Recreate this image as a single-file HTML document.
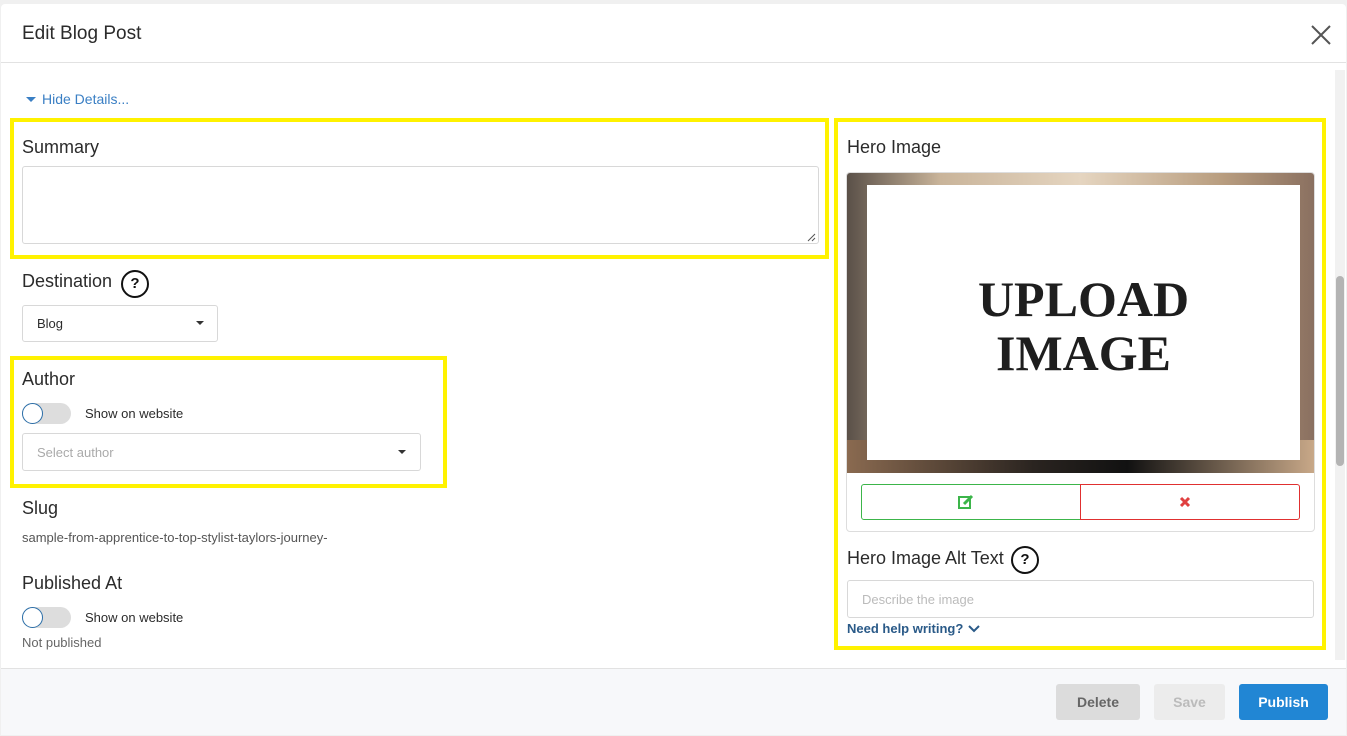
<!DOCTYPE html><html><head><style>
*{box-sizing:border-box;margin:0;padding:0}
body{width:1347px;height:736px;overflow:hidden;background:#f0f0f0;font-family:"Liberation Sans",sans-serif;position:relative;color:#2b2b2b}
.a{position:absolute}
.modal{left:1px;top:4px;width:1345px;height:731px;background:#fff;border-radius:4px}
.lbl{font-size:18px;color:#2b2b2b}
.yb{border:4px solid #fff200}
.inp{border:1px solid #d8d8d8;border-radius:3px;background:#fff}
.tg{width:49px;height:21px;border-radius:11px;background:#ddd}
.tg::after{content:"";position:absolute;left:0;top:0;width:21px;height:21px;border-radius:50%;background:#fff;border:1px solid #2b6ea8;box-sizing:border-box}
.q{width:28px;height:28px;border:2px solid #111;border-radius:50%;font-size:15px;font-weight:bold;text-align:center;line-height:24px;color:#111}
.caret{width:0;height:0;border-left:4px solid transparent;border-right:4px solid transparent;border-top:4px solid #333}
.btn{height:36px;border-radius:3px;font-size:14px;font-weight:bold;text-align:center;line-height:36px}
</style></head><body>
<div class="a modal"></div>
<div class="a" style="left:22px;top:23px;font-size:19px">Edit Blog Post</div>
<svg class="a" style="left:1310px;top:24px" width="22" height="22"><path d="M2 2L20 20M20 2L2 20" stroke="#555" stroke-width="2"/></svg>
<div class="a" style="left:1px;top:62px;width:1345px;height:1px;background:#e2e2e2"></div>
<div class="a" style="left:1335px;top:70px;width:10px;height:590px;background:#f1f1f1"></div>
<div class="a" style="left:1336px;top:276px;width:8px;height:190px;background:#b4b4b4;border-radius:4px"></div>
<div class="a caret" style="left:26px;top:97px;border-top-color:#3a7fc4;border-width:5px 5px 0 5px"></div>
<div class="a" style="left:42px;top:91px;font-size:14px;color:#3a7fc4">Hide Details...</div>

<div class="a yb" style="left:10px;top:118px;width:819px;height:141px"></div>
<div class="a lbl" style="left:22px;top:137px">Summary</div>
<div class="a inp" style="left:22px;top:166px;width:797px;height:78px"></div>
<svg class="a" style="left:806px;top:232px" width="10" height="10"><path d="M9 2L2 9M9 6L6 9" stroke="#555"/></svg>

<div class="a lbl" style="left:22px;top:271px">Destination</div>
<div class="a q" style="left:121px;top:270px">?</div>
<div class="a inp" style="left:22px;top:305px;width:196px;height:37px"></div>
<div class="a" style="left:37px;top:316px;font-size:13px">Blog</div>
<div class="a caret" style="left:196px;top:321px"></div>

<div class="a yb" style="left:10px;top:356px;width:437px;height:132px"></div>
<div class="a lbl" style="left:22px;top:369px">Author</div>
<div class="a tg" style="left:22px;top:403px"></div>
<div class="a" style="left:85px;top:406px;font-size:13px">Show on website</div>
<div class="a inp" style="left:22px;top:433px;width:399px;height:38px"></div>
<div class="a" style="left:37px;top:445px;font-size:13px;color:#aaa">Select author</div>
<div class="a caret" style="left:398px;top:450px"></div>

<div class="a lbl" style="left:22px;top:498px">Slug</div>
<div class="a" style="left:22px;top:530px;font-size:13px;color:#555">sample-from-apprentice-to-top-stylist-taylors-journey-</div>
<div class="a lbl" style="left:22px;top:573px">Published At</div>
<div class="a tg" style="left:22px;top:607px"></div>
<div class="a" style="left:85px;top:610px;font-size:13px">Show on website</div>
<div class="a" style="left:22px;top:635px;font-size:13px;color:#666">Not published</div>

<div class="a yb" style="left:834px;top:118px;width:492px;height:532px"></div>
<div class="a lbl" style="left:847px;top:137px">Hero Image</div>
<div class="a" style="left:846px;top:172px;width:469px;height:360px;border:1px solid #ddd;border-radius:4px"></div>
<div class="a" style="left:847px;top:173px;width:467px;height:300px;background:linear-gradient(90deg,#5a5048,#c9b49a 20%,#e5d5c0 50%,#b99e80 80%,#8a7060);border-radius:3px 3px 0 0"></div>
<div class="a" style="left:847px;top:440px;width:467px;height:33px;background:linear-gradient(90deg,#8a6a50,#2a2420 40%,#111 60%,#c8a888)"></div>
<div class="a" style="left:867px;top:185px;width:433px;height:275px;background:#fff"></div>
<div class="a" style="left:867px;top:272px;width:433px;text-align:center;font-family:'Liberation Serif',serif;font-weight:bold;font-size:50px;line-height:54px;color:#1e1e1e">UPLOAD<br>IMAGE</div>
<div class="a" style="left:861px;top:484px;width:220px;height:36px;border:1px solid #3cb54a;border-radius:3px 0 0 3px"></div>
<div class="a" style="left:1080px;top:484px;width:220px;height:36px;border:1px solid #e03030;border-radius:0 3px 3px 0"></div>
<svg class="a" style="left:958px;top:494px" width="16" height="16"><rect x="1" y="3" width="11" height="11" fill="none" stroke="#3cb54a" stroke-width="2"/><path d="M6 10L14 2" stroke="#3cb54a" stroke-width="3"/></svg>
<svg class="a" style="left:1179px;top:496px" width="12" height="12"><path d="M2 2L10 10M10 2L2 10" stroke="#e04040" stroke-width="3"/></svg>
<div class="a lbl" style="left:847px;top:548px">Hero Image Alt Text</div>
<div class="a q" style="left:1011px;top:546px">?</div>
<div class="a inp" style="left:847px;top:580px;width:467px;height:38px"></div>
<div class="a" style="left:862px;top:592px;font-size:13px;color:#bbb">Describe the image</div>
<div class="a" style="left:847px;top:621px;font-size:13px;font-weight:bold;color:#2a5a88">Need help writing?</div>
<svg class="a" style="left:968px;top:625px" width="12" height="8"><path d="M1 1L6 6L11 1" fill="none" stroke="#2a5a88" stroke-width="2"/></svg>

<div class="a" style="left:1px;top:668px;width:1345px;height:67px;background:#f7f8fa;border-top:1px solid #e2e2e2"></div>
<div class="a btn" style="left:1056px;top:684px;width:84px;background:#dcdcdc;color:#666">Delete</div>
<div class="a btn" style="left:1154px;top:684px;width:71px;background:#ececec;color:#bbb">Save</div>
<div class="a btn" style="left:1239px;top:684px;width:89px;background:#2186d4;color:#fff">Publish</div>
</body></html>
